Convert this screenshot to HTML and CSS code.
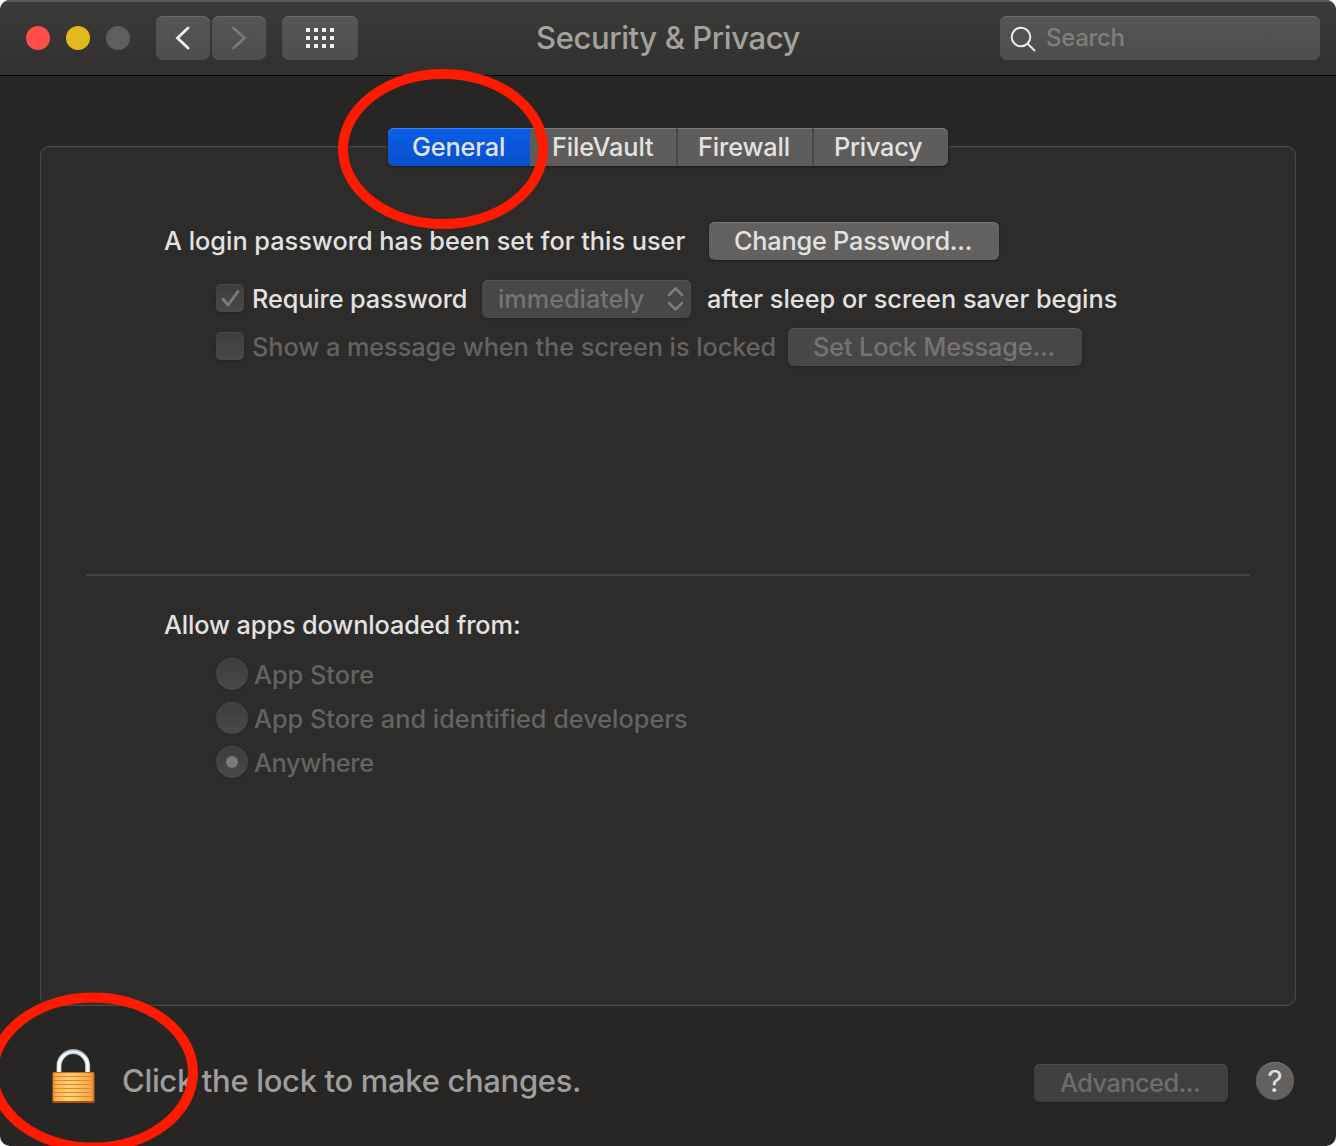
FILE: index.html
```
<!DOCTYPE html>
<html lang="en">
<head>
<meta charset="utf-8">
<title>Security &amp; Privacy</title>
<link rel="stylesheet" href="styles.css">
</head>
<body>
<div class="window">
  <header class="titlebar">
    <div class="lights"><i class="light close"></i><i class="light minimize"></i><i class="light zoom"></i></div>
    <div class="nav">
      <button class="tool"><svg width="54" height="44" viewBox="0 0 54 44"><path d="M32 12 21.500 22 32 32" fill="none" stroke="#f0efee" stroke-width="2.8" stroke-linecap="round"/></svg></button>
      <button class="tool"><svg width="54" height="44" viewBox="0 0 54 44"><path d="M21.500 12 32.500 22 21.500 32" fill="none" stroke="#7b7a78" stroke-width="2.8" stroke-linecap="round"/></svg></button>
    </div>
    <button class="tool grid"><svg width="76" height="44" viewBox="0 0 76 44"><path d="M24 14h28M24 22h28M24 30h28" fill="none" stroke="#f0efee" stroke-width="4" stroke-dasharray="4"/></svg></button>
    <h1 class="title"><span class="t">Security &amp; Privacy</span></h1>
    <div class="search">
      <svg width="30" height="30" viewBox="0 0 30 30"><g fill="none" stroke="#eeedec" stroke-width="2"><circle cx="11" cy="14" r="9.300"/><path d="M17.500 20.500 25 28"/></g></svg>
      <span class="t">Search</span>
    </div>
  </header>
  <main class="content">
    <section class="panel">
      <nav class="tabs">
        <div class="tab active"><span class="t">General</span></div>
        <div class="tab vault"><span class="t">FileVault</span></div>
        <div class="tab wall"><span class="t">Firewall</span></div>
        <div class="tab priv"><span class="t">Privacy</span></div>
      </nav>
      <div class="row login">
        <span class="t status">A login password has been set for this user</span>
        <button class="btn change"><span class="t">Change Password...</span></button>
      </div>
      <div class="row require">
        <i class="check"><svg width="28" height="28" viewBox="0 0 28 28"><path d="M7 15 12 21 22 7.500" fill="none" stroke="#7b7b79" stroke-width="2.800" stroke-linecap="round" stroke-linejoin="round"/></svg></i>
        <span class="t require-label">Require password</span>
        <div class="btn dim popup"><span class="t">immediately</span><svg width="18" height="28" viewBox="0 0 18 28"><path d="M2 10 8.500 3.500 15 10M2 18 8.500 24.500 15 18" fill="none" stroke="#7d7b7c" stroke-width="2.600" stroke-linecap="round" stroke-linejoin="round"/></svg></div>
        <span class="t after">after sleep or screen saver begins</span>
      </div>
      <div class="row message">
        <i class="check"></i>
        <span class="t message-label">Show a message when the screen is locked</span>
        <button class="btn dim lockmsg"><span class="t">Set Lock Message...</span></button>
      </div>
      <hr class="rule">
      <div class="row allow"><span class="t">Allow apps downloaded from:</span></div>
      <div class="radios">
        <div class="radio"><i class="dot"></i><span class="t">App Store</span></div>
        <div class="radio"><i class="dot"></i><span class="t">App Store and identified developers</span></div>
        <div class="radio anywhere"><i class="dot on"></i><span class="t">Anywhere</span></div>
      </div>
    </section>
    <footer class="footer">
      <svg class="lock" width="44" height="56" viewBox="0 0 44 56">
        <defs>
          <linearGradient id="brass" x1="0" x2="1" y1="0" y2="0"><stop offset="0" stop-color="#d8761c"/><stop offset=".07" stop-color="#f8b04a"/><stop offset=".4" stop-color="#ffd27a"/><stop offset=".93" stop-color="#f5a53c"/><stop offset="1" stop-color="#b95c10"/></linearGradient>
          <linearGradient id="steel" x1="0" x2="0" y1="0" y2="1"><stop offset="0" stop-color="#b4bec6"/><stop offset=".35" stop-color="#e6edf2"/><stop offset="1" stop-color="#dde3e8"/></linearGradient>
        </defs>
        <path d="M7 24V18a14.300 14.300 0 0 1 28.600 0V24" fill="none" stroke="#7f8b95" stroke-width="5.200"/>
        <path d="M7 24V18a14.300 14.300 0 0 1 28.600 0V24" fill="none" stroke="url(#steel)" stroke-width="4.200"/>
        <path d="M7 24V18a14.300 14.300 0 0 1 28.600 0V24" fill="none" stroke="#fff" stroke-width="1.600"/>
        <rect x=".5" y="24" width="42" height="31" rx="1.500" fill="url(#brass)"/>
        <path d="M1 28.500h41M1 32.500h41M1 36.500h41M1 40.500h41M1 44.500h41M1 48.500h41" stroke="#d98a2e" stroke-width="1.200"/>
        <path d="M1 24.600h41" stroke="#b5671a"/><path d="M1 54h41" stroke="#a8520e" stroke-width="2"/>
      </svg>
      <span class="t hint">Click the lock to make changes.</span>
      <button class="btn advanced"><span class="t">Advanced...</span></button>
      <button class="help">?</button>
    </footer>
  </main>
  <svg class="marks" width="1336" height="1146" viewBox="0 0 1336 1146"><g fill="none" stroke="#ff1a00" stroke-width="10"><ellipse cx="443" cy="149" rx="100" ry="75"/><ellipse cx="93" cy="1072.500" rx="100" ry="75"/></g></svg>
</div>
</body>
</html>
```
FILE: styles.css
```
* { box-sizing: border-box; }
body { margin: 0; background: #fff; font-family: Inter, "Liberation Sans", sans-serif; font-size: 25.3px; font-weight: 450; color: #e3e2e1; }
.window { position: relative; display: flex; flex-direction: column; width: 1336px; height: 1146px; overflow: hidden; border-radius: 10px; background: #272624; }
button { border: 0; padding: 0; font: inherit; color: inherit; }
svg { display: block; }
.t { white-space: nowrap; }
.row .t, .tab .t, .advanced .t { margin-bottom: 2px; }
.titlebar { display: flex; align-items: center; height: 76px; padding: 0 16px 0 26px; border-bottom: 1px solid #000; background: linear-gradient(#3c3b39, #31302e); box-shadow: inset 0 2px #5b5a59; }
.lights { display: flex; gap: 16px; width: 130px; }
.light { width: 24px; height: 24px; border-radius: 50%; }
.close { background: #ff4f47; }
.minimize { background: #e2b91c; }
.zoom { background: #5f5e5d; }
.nav { display: flex; gap: 2px; margin-right: 16px; }
.tool, .search { border-radius: 7px; background: linear-gradient(#565553, #4f4e4c); box-shadow: inset 0 1px #6b6a68; }
.title { flex: 1; margin: 0; padding-left: 178px; font-size: 31px; font-weight: 450; letter-spacing: -.4px; color: #a3a29f; }
.search { display: flex; align-items: center; gap: 6px; width: 320px; height: 44px; padding-left: 10px; font-size: 24px; letter-spacing: -.35px; color: #7f7e7c; }
.content { flex: 1; display: flex; flex-direction: column; padding: 70px 40px 0; }
.panel { height: 860px; border: 1px solid #484745; border-radius: 9px; background: #2d2c2b; box-shadow: inset 0 0 0 1px #333230; }
.tabs { display: flex; width: 560px; height: 38px; margin: -19px auto 0; border-radius: 6px; background: #5e5d5b; box-shadow: inset 0 1px #7b7a78, 0 1px 2px #1a1919; letter-spacing: -.13px; }
.tab { display: flex; align-items: center; border-right: 2px solid #4b4a49; box-shadow: inset 0 1px #7b7a78; }
.active { width: 142px; padding-left: 24px; border: 0; border-radius: 6px 0 0 6px; background: linear-gradient(#0a5ee6, #0850cb); box-shadow: inset 0 1px #3d80ea; }
.vault { width: 148px; padding-left: 22px; }
.wall { width: 136px; padding-left: 20px; }
.priv { width: 134px; padding-left: 20px; border: 0; border-radius: 0 6px 6px 0; letter-spacing: -.25px; }
.row { display: flex; align-items: center; height: 38px; }
.login { margin: 56px 0 0 123px; }
.require { margin: 20px 0 0 175px; }
.message { margin: 10px 0 0 175px; }
.btn { display: flex; align-items: center; flex: none; height: 38px; border-radius: 6px; background: #62615f; box-shadow: inset 0 1px #7b7a78, 0 1px 2px #1f1e1d; }
.dim { background: #484647; color: #757374; box-shadow: inset 0 1px #555354, 0 1px 2px #242322; }
.change { width: 290px; padding-left: 25px; letter-spacing: -.22px; }
.popup { width: 209px; padding: 0 6px 0 16px; justify-content: space-between; letter-spacing: -.05px; }
.lockmsg { width: 294px; padding-left: 25px; letter-spacing: -.14px; }
.status { width: 545px; }
.require-label { width: 230px; letter-spacing: -.12px; }
.after { margin-left: 16px; }
.message-label { width: 536px; letter-spacing: -.05px; color: #646361; }
.check { flex: none; width: 28px; height: 28px; margin: 0 8px 2px 0; border-radius: 5px; background: linear-gradient(#3e3d3c, #4a4948); box-shadow: inset 0 1px #4b4a49, 0 1px 2px #242322; }
.rule { height: 2px; margin: 208px 45px 0; border: 0; background: #444342; }
.allow { margin: 30px 0 0 123px; letter-spacing: -.11px; }
.radios { display: flex; flex-direction: column; gap: 12px; margin: 14px 0 0 175px; color: #646361; }
.radio { display: flex; align-items: center; gap: 6px; height: 32px; }
.anywhere { letter-spacing: -.35px; }
.dot { display: grid; place-items: center; width: 32px; height: 32px; border-radius: 50%; background: linear-gradient(#3e3d3c, #4a4948); box-shadow: inset 0 1px #4b4a49, 0 1px 2px #242322; }
.on::after { content: ""; width: 12px; height: 12px; border-radius: 50%; background: #7b7b79; }
.footer { display: flex; align-items: center; height: 60px; margin-top: 44px; padding: 0 2px 0 12px; }
.lock { margin-bottom: 8px; }
.hint { flex: 1; margin-left: 26px; font-size: 31px; letter-spacing: -.33px; color: #9f9e9c; }
.advanced { width: 194px; margin: 6px 28px 0 0; padding-left: 26px; background: #41403f; color: #6e6d6c; box-shadow: inset 0 1px #504f4d, 0 1px 2px #1f1e1d; letter-spacing: -.5px; }
.help { width: 38px; height: 38px; margin-top: 2px; border-radius: 50%; background: #62615f; box-shadow: inset 0 1px #7b7a78; font-size: 30px; font-weight: 400; line-height: 38px; }
.marks { position: absolute; left: 0; top: 0; pointer-events: none; }
```
